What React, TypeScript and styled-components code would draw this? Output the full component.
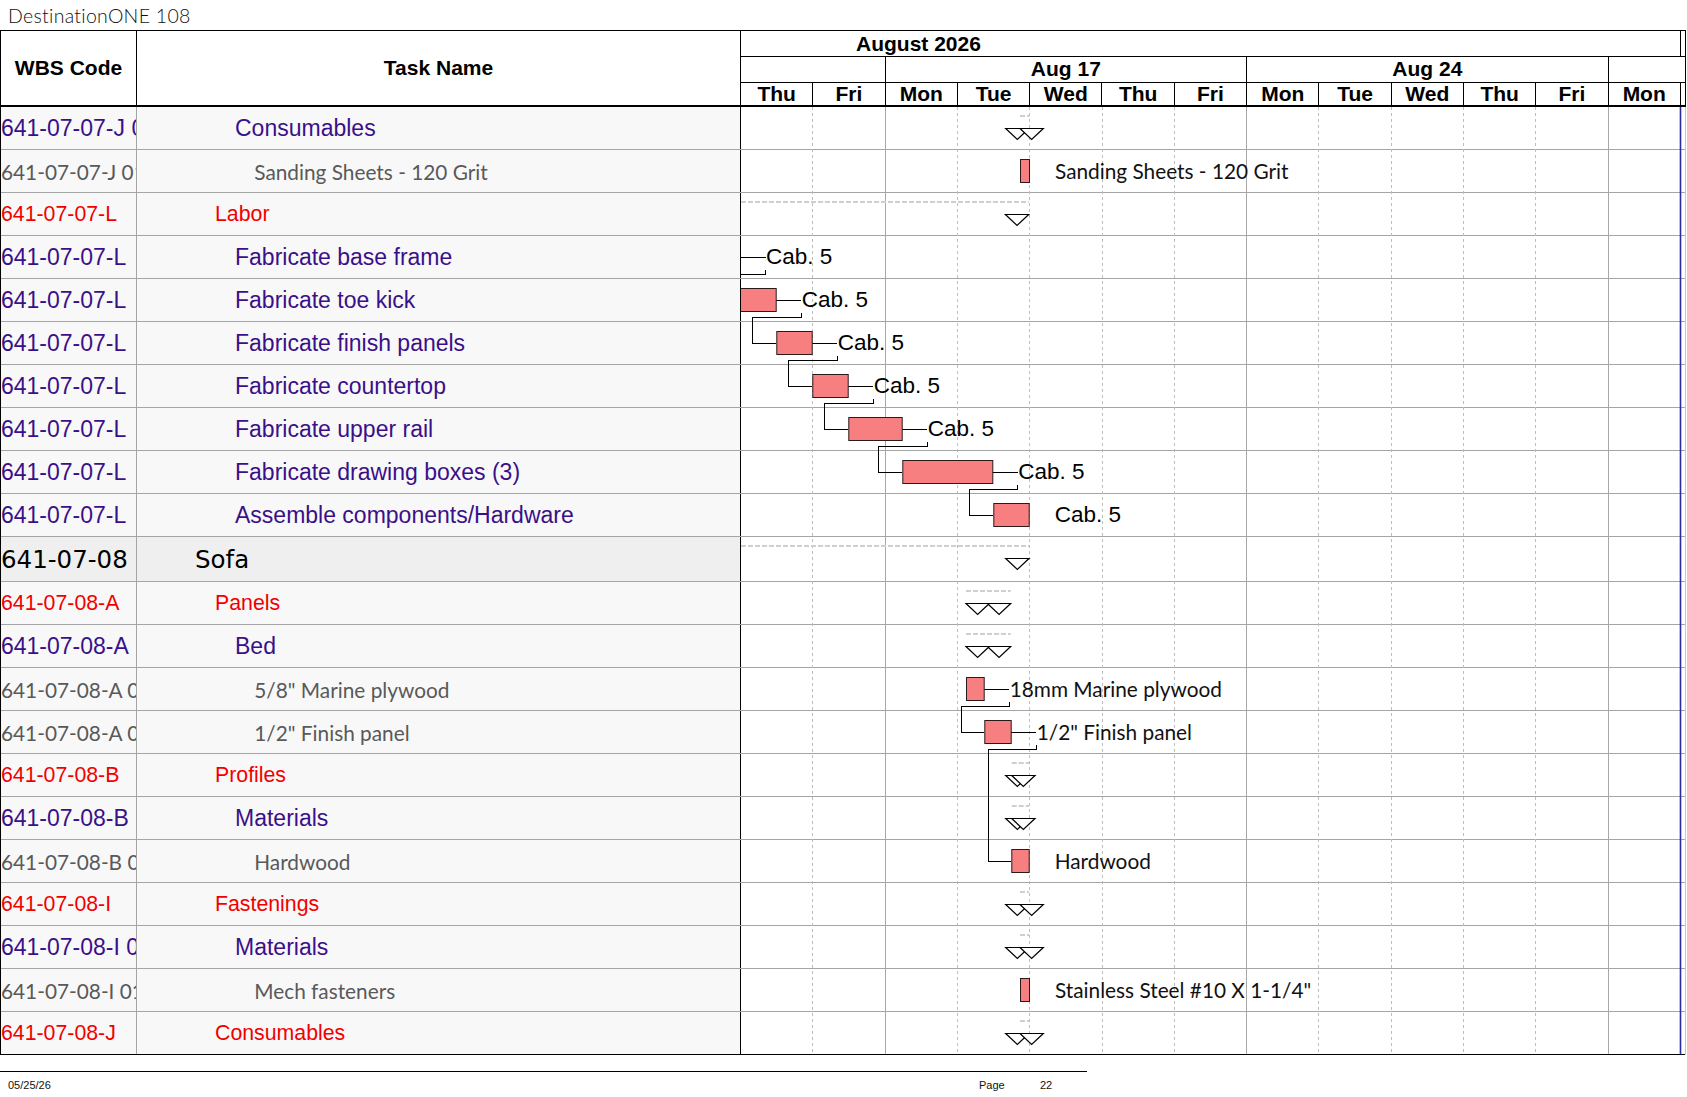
import React from 'react';
import styled, { createGlobalStyle, css } from 'styled-components';

const DAY = 72.3;
const CHART_X = 741;
const BODY_Y = 107;

type Kind = 'top' | 'summary' | 'task' | 'item';

interface RowData {
  wbs: string;
  name: string;
  kind: Kind;
}

const rows: RowData[] = [
  { wbs: '641-07-07-J 01', name: 'Consumables', kind: 'task' },
  { wbs: '641-07-07-J 01 01', name: 'Sanding Sheets - 120 Grit', kind: 'item' },
  { wbs: '641-07-07-L', name: 'Labor', kind: 'summary' },
  { wbs: '641-07-07-L', name: 'Fabricate base frame', kind: 'task' },
  { wbs: '641-07-07-L', name: 'Fabricate toe kick', kind: 'task' },
  { wbs: '641-07-07-L', name: 'Fabricate finish panels', kind: 'task' },
  { wbs: '641-07-07-L', name: 'Fabricate countertop', kind: 'task' },
  { wbs: '641-07-07-L', name: 'Fabricate upper rail', kind: 'task' },
  { wbs: '641-07-07-L', name: 'Fabricate drawing boxes (3)', kind: 'task' },
  { wbs: '641-07-07-L', name: 'Assemble components/Hardware', kind: 'task' },
  { wbs: '641-07-08', name: 'Sofa', kind: 'top' },
  { wbs: '641-07-08-A', name: 'Panels', kind: 'summary' },
  { wbs: '641-07-08-A', name: 'Bed', kind: 'task' },
  { wbs: '641-07-08-A 01', name: '5/8" Marine plywood', kind: 'item' },
  { wbs: '641-07-08-A 02', name: '1/2" Finish panel', kind: 'item' },
  { wbs: '641-07-08-B', name: 'Profiles', kind: 'summary' },
  { wbs: '641-07-08-B', name: 'Materials', kind: 'task' },
  { wbs: '641-07-08-B 01', name: 'Hardwood', kind: 'item' },
  { wbs: '641-07-08-I', name: 'Fastenings', kind: 'summary' },
  { wbs: '641-07-08-I 01', name: 'Materials', kind: 'task' },
  { wbs: '641-07-08-I 01 01', name: 'Mech fasteners', kind: 'item' },
  { wbs: '641-07-08-J', name: 'Consumables', kind: 'summary' },
];

const rowHeight = (k: Kind) => (k === 'top' ? 45 : 43);

const rowTop = (i: number) => {
  let y = BODY_Y;
  for (let r = 0; r < i; r++) y += rowHeight(rows[r].kind);
  return y;
};

interface BarData {
  row: number;
  x1: number;
  x2: number;
  label: string;
  face: 'arial' | 'calibri';
  link?: { xBack: number; toRow: number; toX: number };
}

const bars: BarData[] = [
  { row: 1, x1: 1020, x2: 1029, label: 'Sanding Sheets - 120 Grit', face: 'calibri' },
  { row: 3, x1: 700, x2: 740, label: 'Cab. 5', face: 'arial', link: { xBack: 716, toRow: 4, toX: 740 } },
  { row: 4, x1: 735, x2: 775.7, label: 'Cab. 5', face: 'arial', link: { xBack: 752.3, toRow: 5, toX: 776.3 } },
  { row: 5, x1: 776.3, x2: 811.7, label: 'Cab. 5', face: 'arial', link: { xBack: 788.3, toRow: 6, toX: 812.3 } },
  { row: 6, x1: 812.3, x2: 847.7, label: 'Cab. 5', face: 'arial', link: { xBack: 824.3, toRow: 7, toX: 848.3 } },
  { row: 7, x1: 848.3, x2: 901.7, label: 'Cab. 5', face: 'arial', link: { xBack: 878.3, toRow: 8, toX: 902.3 } },
  { row: 8, x1: 902.3, x2: 992.3, label: 'Cab. 5', face: 'arial', link: { xBack: 969.3, toRow: 9, toX: 993.3 } },
  { row: 9, x1: 993.3, x2: 1028.7, label: 'Cab. 5', face: 'arial' },
  { row: 13, x1: 966, x2: 983.7, label: '18mm Marine plywood', face: 'calibri', link: { xBack: 960.7, toRow: 14, toX: 984.3 } },
  { row: 14, x1: 984.3, x2: 1010.7, label: '1/2" Finish panel', face: 'calibri', link: { xBack: 987.7, toRow: 17, toX: 1011.3 } },
  { row: 17, x1: 1011.3, x2: 1028.7, label: 'Hardwood', face: 'calibri' },
  { row: 20, x1: 1020, x2: 1029, label: 'Stainless Steel #10 X 1-1/4"', face: 'calibri' },
];

interface SummaryData {
  row: number;
  s: number;
  e: number;
}

const summaries: SummaryData[] = [
  { row: 0, s: 1020, e: 1029 },
  { row: 2, s: 700, e: 1028.7 },
  { row: 10, s: 700, e: 1029 },
  { row: 11, s: 966, e: 1010.7 },
  { row: 12, s: 966, e: 1010.7 },
  { row: 15, s: 1011.7, e: 1029 },
  { row: 16, s: 1011.7, e: 1029 },
  { row: 18, s: 1020, e: 1029 },
  { row: 19, s: 1020, e: 1029 },
  { row: 21, s: 1020, e: 1029 },
];

const days = ['Thu', 'Fri', 'Mon', 'Tue', 'Wed', 'Thu', 'Fri', 'Mon', 'Tue', 'Wed', 'Thu', 'Fri', 'Mon'];
const weeks = [
  { label: '', span: 2 },
  { label: 'Aug 17', span: 5 },
  { label: 'Aug 24', span: 5 },
];

const GlobalStyle = createGlobalStyle`
  *, *::before, *::after { box-sizing: border-box; }
  html, body { margin: 0; padding: 0; background: #ffffff; }
  body {
    width: 1687px;
    height: 1097px;
    overflow: hidden;
    font-family: "Liberation Sans", Arial, sans-serif;
    color: #000;
  }
`;

const Page = styled.div`
  width: 1687px;
  height: 1097px;
  display: flex;
  flex-direction: column;
`;

const TitleBar = styled.div`
  height: 30px;
  padding-left: 8px;
  display: flex;
  align-items: center;
  font-family: "Lato", "DejaVu Sans", sans-serif;
  font-weight: 300;
  font-size: 19.5px;
  letter-spacing: 0.3px;
  color: #111;
`;

const Table = styled.div`
  display: flex;
  width: 1686px;
  border-top: 1px solid #000;
  border-left: 1px solid #000;
`;

const LeftPane = styled.div`
  width: 740px;
  flex: none;
  display: flex;
  flex-direction: column;
`;

const LeftHeader = styled.div`
  height: 76px;
  display: flex;
  border-bottom: 2px solid #000;
`;

const HeaderCell = styled.div<{ $w?: number }>`
  ${(p) => (p.$w ? `width: ${p.$w}px; flex: none;` : 'flex: 1;')}
  border-right: 1px solid #000;
  display: flex;
  align-items: center;
  justify-content: center;
  font-weight: 700;
  font-size: 21px;
  padding-bottom: 1px;
`;

const kindFont = (k: Kind) => {
  switch (k) {
    case 'top':
      return css`
        font-family: "DejaVu Sans", Verdana, sans-serif;
        font-size: 24.5px;
        color: #000;
      `;
    case 'summary':
      return css`
        font-family: "Liberation Sans", Arial, sans-serif;
        font-size: 21.3px;
        color: #f20000;
      `;
    case 'task':
      return css`
        font-family: "Liberation Sans", Arial, sans-serif;
        font-size: 23px;
        color: #3a1089;
      `;
    default:
      return css`
        font-family: "Lato", "Open Sans", sans-serif;
        font-size: 20.8px;
        color: #595959;
      `;
  }
};

const indent: Record<Kind, number> = { top: 58, summary: 78, task: 98, item: 117.3 };

const LeftRow = styled.div<{ $kind: Kind }>`
  display: flex;
  height: ${(p) => rowHeight(p.$kind)}px;
  border-bottom: 1px solid #a5a5a5;
  background: ${(p) => (p.$kind === 'top' ? '#efefef' : '#f8f8f8')};
  &:last-child { border-bottom-color: #000; }
`;

const WbsCell = styled.div<{ $kind: Kind }>`
  width: 136px;
  flex: none;
  border-right: 1px solid #a5a5a5;
  overflow: hidden;
  white-space: nowrap;
  display: flex;
  align-items: center;
  ${(p) => kindFont(p.$kind)}
`;

const NameCell = styled.div<{ $kind: Kind }>`
  flex: 1;
  border-right: 1px solid #000;
  overflow: hidden;
  white-space: nowrap;
  display: flex;
  align-items: center;
  padding-left: ${(p) => indent[p.$kind]}px;
  ${(p) => kindFont(p.$kind)}
`;

const ChartPane = styled.div`
  width: 945px;
  flex: none;
  display: flex;
  flex-direction: column;
`;

const ChartHeader = styled.div`
  display: flex;
  flex-direction: column;
  border-right: 1px solid #000;
  font-weight: 700;
  font-size: 21px;
`;

const TierRow = styled.div<{ $h: number; $thick?: boolean }>`
  height: ${(p) => p.$h}px;
  display: flex;
  border-bottom: ${(p) => (p.$thick ? 2 : 1)}px solid #000;
`;

const MonthCell = styled.div`
  width: ${13 * DAY}px;
  flex: none;
  border-right: 1px solid #000;
  padding-left: 115px;
  display: flex;
  align-items: center;
`;

const WeekCell = styled.div<{ $w: number }>`
  width: ${(p) => p.$w}px;
  flex: none;
  border-right: 1px solid #000;
  display: flex;
  align-items: center;
  justify-content: center;
  padding-bottom: 2px;
`;

const DayCell = styled.div`
  width: ${DAY}px;
  flex: none;
  border-right: 1px solid #000;
  display: flex;
  align-items: center;
  justify-content: center;
  line-height: 22px;
`;

const Filler = styled.div`
  flex: 1;
`;

const ChartBody = styled.div`
  position: relative;
  border-right: 1px solid #c8c8c8;
`;

const ChartRow = styled.div<{ $kind: Kind }>`
  height: ${(p) => rowHeight(p.$kind)}px;
  border-bottom: 1px solid #a5a5a5;
  &:last-of-type { border-bottom-color: #000; }
`;

const Overlay = styled.svg`
  position: absolute;
  left: 0;
  top: 0;
  width: 944px;
  height: 948px;
  overflow: hidden;
  pointer-events: none;
`;

const BarLabel = styled.span<{ $face: 'arial' | 'calibri' }>`
  position: absolute;
  line-height: 26px;
  white-space: nowrap;
  color: #000;
  ${(p) =>
    p.$face === 'arial'
      ? css`
          font-family: "Liberation Sans", Arial, sans-serif;
          font-size: 22.5px;
        `
      : css`
          font-family: "Lato", "Open Sans", sans-serif;
          font-size: 20.8px;
          color: #111;
        `}
`;

const Footer = styled.div`
  margin-top: 16px;
  width: 1087px;
  height: 26px;
  border-top: 1px solid #000;
  display: flex;
  align-items: center;
  font-family: "Liberation Sans", Arial, sans-serif;
  font-size: 11px;
  color: #111;
`;

const FooterCell = styled.div<{ $w?: number; $pl?: number }>`
  ${(p) => (p.$w ? `width: ${p.$w}px; flex: none;` : 'flex: 1;')}
  padding-left: ${(p) => p.$pl ?? 0}px;
`;

const TRI_W = 23.3;
const TRI_H = 11;

const tri = (a: number, t: number) =>
  `${a},${t} ${a + TRI_W},${t} ${a + TRI_W / 2},${t + TRI_H}`;

function GanttOverlay() {
  const grid = [];
  for (let k = 1; k <= 12; k++) {
    const x = 740.5 + DAY * k;
    const monday = days[k] === 'Mon';
    grid.push(
      <line
        key={k}
        x1={x}
        x2={x}
        y1={107}
        y2={1054}
        stroke={monday ? '#a8a8a8' : '#bdbdbd'}
        strokeWidth={1}
        strokeDasharray={monday ? undefined : '3 3'}
        shapeRendering="crispEdges"
      />
    );
  }
  return (
    <Overlay viewBox="0 0 944 948">
      <g transform={`translate(${-CHART_X} ${-BODY_Y})`}>
        {grid}
        <line x1={1680.5} x2={1680.5} y1={107} y2={1054} stroke="#2a2aa8" strokeWidth={1.6} />
        {summaries.map((s) => {
          const top = rowTop(s.row);
          const t = top + 21.5;
          return (
            <g key={`s${s.row}`}>
              <line
                x1={Math.max(s.s, 741)}
                x2={s.e}
                y1={top + 9}
                y2={top + 9}
                stroke="#cfcfcf"
                strokeWidth={2}
                strokeDasharray="5 2"
              />
              <polygon points={tri(s.e - TRI_W, t)} fill="#fff" stroke="#000" strokeWidth={1.2} />
              <polygon points={tri(s.s, t)} fill="#fff" stroke="#000" strokeWidth={1.2} />
            </g>
          );
        })}
        {bars.map((b) => {
          const top = rowTop(b.row);
          const cy = top + 21;
          const lx = b.x2 + 25;
          let path = '';
          if (b.link) {
            const ncy = rowTop(b.link.toRow) + 21;
            path = `M${b.x2} ${cy + 0.5} H${lx + 0.5} M${lx + 0.5} ${top + 33.5} V${top + 38.5} H${b.link.xBack + 0.5} V${ncy + 0.5} H${b.link.toX}`;
          }
          return (
            <g key={`b${b.row}`}>
              {path && <path d={path} fill="none" stroke="#000" strokeWidth={1} shapeRendering="crispEdges" />}
              <rect
                x={b.x1 + 0.5}
                y={top + 9.5}
                width={b.x2 - b.x1}
                height={23}
                fill="#f77f7f"
                stroke="#2a1a1a"
                strokeWidth={1}
              />
            </g>
          );
        })}
      </g>
    </Overlay>
  );
}

export default function App() {
  return (
    <>
      <GlobalStyle />
      <Page>
        <TitleBar>DestinationONE 108</TitleBar>
        <Table>
          <LeftPane>
            <LeftHeader>
              <HeaderCell $w={136}>WBS Code</HeaderCell>
              <HeaderCell>Task Name</HeaderCell>
            </LeftHeader>
            {rows.map((r, i) => (
              <LeftRow key={i} $kind={r.kind}>
                <WbsCell $kind={r.kind}>{r.wbs}</WbsCell>
                <NameCell $kind={r.kind}>{r.name}</NameCell>
              </LeftRow>
            ))}
          </LeftPane>
          <ChartPane>
            <ChartHeader>
              <TierRow $h={26}>
                <MonthCell>August 2026</MonthCell>
                <Filler />
              </TierRow>
              <TierRow $h={26}>
                {weeks.map((w, i) => (
                  <WeekCell key={i} $w={w.span * DAY}>
                    {w.label}
                  </WeekCell>
                ))}
                <Filler />
              </TierRow>
              <TierRow $h={24} $thick>
                {days.map((d, i) => (
                  <DayCell key={i}>{d}</DayCell>
                ))}
                <Filler />
              </TierRow>
            </ChartHeader>
            <ChartBody>
              {rows.map((r, i) => (
                <ChartRow key={i} $kind={r.kind} />
              ))}
              <GanttOverlay />
              {bars.map((b) => (
                <BarLabel
                  key={`l${b.row}`}
                  $face={b.face}
                  style={{ left: b.x2 + 25 - CHART_X + 1, top: rowTop(b.row) + 21 - BODY_Y - 13 }}
                >
                  {b.label}
                </BarLabel>
              ))}
            </ChartBody>
          </ChartPane>
        </Table>
        <Footer>
          <FooterCell $w={979} $pl={8}>
            05/25/26
          </FooterCell>
          <FooterCell $w={61}>Page</FooterCell>
          <FooterCell>22</FooterCell>
        </Footer>
      </Page>
    </>
  );
}
